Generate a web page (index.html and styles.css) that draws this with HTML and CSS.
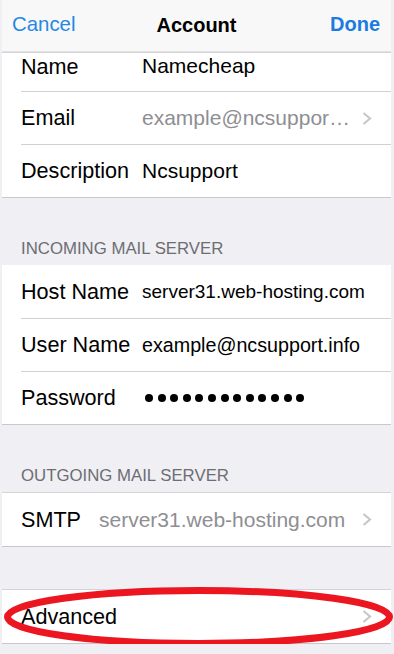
FILE: index.html
```html
<!DOCTYPE html>
<html lang="en">
<head>
    <meta charset="UTF-8">
    <meta name="viewport" content="width=device-width, initial-scale=1.0">
    <title>Account</title>
    <link rel="stylesheet" href="styles.css">
</head>
<body>
    <div class="screen">
        <header class="nav-bar">
            <a class="nav-btn">Cancel</a>
            <h1 class="nav-title">Account</h1>
            <a class="nav-btn nav-done">Done</a>
        </header>

        <section class="group">
            <div class="row row-cut">
                <div class="cell">
                    <span class="label">Name</span>
                    <span class="value">Namecheap</span>
                </div>
            </div>
            <div class="row">
                <div class="cell">
                    <span class="label">Email</span>
                    <span class="value muted">example@ncsuppor…</span>
                    <svg class="chevron" viewBox="0 0 10 13"><path d="M1.5 1 L8 6.5 L1.5 12"/></svg>
                </div>
            </div>
            <div class="row">
                <div class="cell">
                    <span class="label">Description</span>
                    <span class="value">Ncsupport</span>
                </div>
            </div>
        </section>

        <h2 class="section-title">INCOMING MAIL SERVER</h2>
        <section class="group no-top">
            <div class="row">
                <div class="cell">
                    <span class="label">Host Name</span>
                    <span class="value small">server31.web-hosting.com</span>
                </div>
            </div>
            <div class="row">
                <div class="cell">
                    <span class="label">User Name</span>
                    <span class="value mid">example@ncsupport.info</span>
                </div>
            </div>
            <div class="row">
                <div class="cell">
                    <span class="label">Password</span>
                    <span class="dots">
                        <i></i><i></i><i></i><i></i><i></i><i></i><i></i><i></i><i></i><i></i><i></i><i></i><i></i>
                    </span>
                </div>
            </div>
        </section>

        <h2 class="section-title">OUTGOING MAIL SERVER</h2>
        <section class="group">
            <div class="row">
                <div class="cell">
                    <span class="label label-short">SMTP</span>
                    <span class="value muted">server31.web-hosting.com</span>
                    <svg class="chevron" viewBox="0 0 10 13"><path d="M1.5 1 L8 6.5 L1.5 12"/></svg>
                </div>
            </div>
        </section>

        <div class="spacer"></div>
        <section class="group advanced">
            <div class="row">
                <div class="cell">
                    <span class="label">Advanced</span>
                    <svg class="chevron" viewBox="0 0 10 13"><path d="M1.5 1 L8 6.5 L1.5 12"/></svg>
                </div>
            </div>
            <!-- red mark drawn over the row -->
            <svg class="mark" viewBox="0 0 391 64">
                <ellipse cx="195.5" cy="32" rx="191" ry="26.5"/>
            </svg>
        </section>
    </div>
</body>
</html>
```

FILE: styles.css
```css
* {
    margin: 0;
    padding: 0;
    box-sizing: border-box;
}

body {
    background: #efeff4;
    font-family: 'Liberation Sans', Arial, sans-serif;
    color: #000;
    overflow: hidden;
}

.screen {
    width: 389px;
    margin-left: 2px;
}

.nav-bar {
    height: 52px;
    background: #f8f8f8;
    border-bottom: 1px solid #e2e2e4;
    display: flex;
    align-items: center;
    justify-content: space-between;
    padding: 0 11px 2px 10px;
    position: relative;
}

.nav-btn {
    font-size: 20.4px;
    color: #2688e4;
}

.nav-done {
    font-size: 20px;
    font-weight: bold;
    color: #1a7be2;
}

.nav-title {
    position: absolute;
    left: 0;
    right: 0;
    top: 14px;
    text-align: center;
    font-size: 20px;
    font-weight: bold;
    pointer-events: none;
}

.group {
    background: #fff;
    border-top: 1px solid #d4d4d8;
    border-bottom: 1px solid #c8c7cc;
}

.group.no-top {
    border-top: none;
}

.row {
    padding-left: 19px;
}

.cell {
    height: 53px;
    display: flex;
    align-items: center;
    padding-right: 19px;
}

.row + .row .cell {
    border-top: 1px solid #d1d1d5;
}

.row-cut .cell {
    height: 38px;
    align-items: flex-start;
    padding-top: 1px;
}

.label {
    width: 121px;
    flex-shrink: 0;
    font-size: 21.6px;
}

.label-short {
    width: 78px;
}

.value {
    flex: 1;
    font-size: 21px;
    white-space: nowrap;
}

.value.small {
    font-size: 19px;
}

.value.mid {
    font-size: 19.7px;
}

.value.muted {
    color: #8e8e93;
}

.chevron {
    width: 10px;
    height: 13px;
    margin-left: auto;
    flex-shrink: 0;
}

.chevron path {
    fill: none;
    stroke: #c7c7cc;
    stroke-width: 2.2;
}

.dots {
    display: flex;
    gap: 4.6px;
    margin-left: 3px;
}

.dots i {
    width: 8px;
    height: 8px;
    border-radius: 50%;
    background: #000;
}

.section-title {
    height: 67px;
    display: flex;
    align-items: flex-end;
    padding: 0 0 6px 19px;
    font-size: 16.8px;
    font-weight: normal;
    color: #6d6d72;
}

.spacer {
    height: 42px;
}

.advanced {
    position: relative;
}

.mark {
    position: absolute;
    left: 1px;
    top: -5px;
    width: 391px;
    height: 64px;
    overflow: visible;
}

.mark ellipse {
    fill: none;
    stroke: #ec1620;
    stroke-width: 7;
}
```
